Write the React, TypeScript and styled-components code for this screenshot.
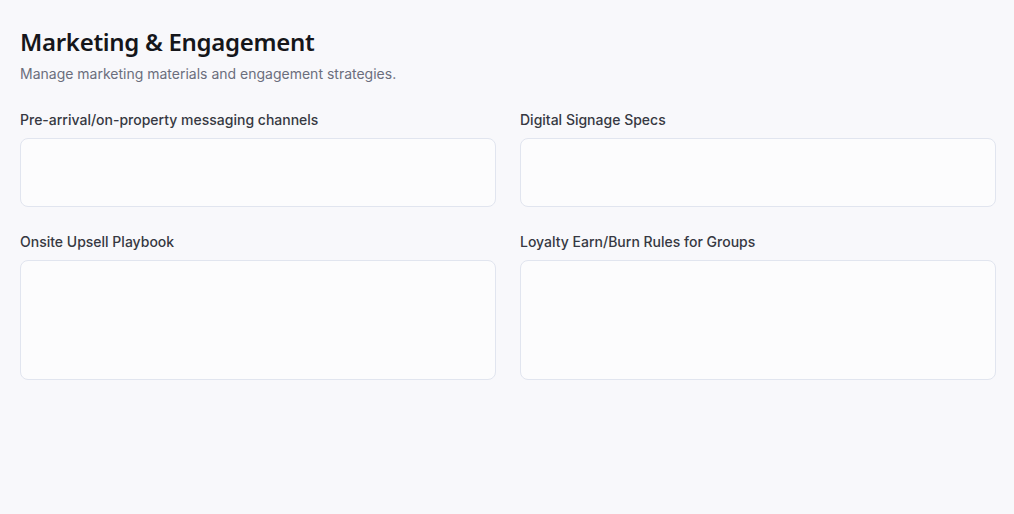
import { FunctionComponent } from 'react';
import styled, { createGlobalStyle } from 'styled-components';

interface IField {
  label: string;
  tall?: boolean;
}

const GlobalStyle = createGlobalStyle`
  html, body {
    margin: 0;
    padding: 0;
    background: #f8f8fb;
  }
  * {
    box-sizing: border-box;
  }
`;

const Page = styled.div`
  min-height: 514px;
  padding: 26px 18px 20px 20px;
  background: #f8f8fb;
  font-family: Inter, 'Noto Sans', sans-serif;
`;

const Title = styled.h1`
  margin: 0;
  font-family: 'Noto Sans', Inter, sans-serif;
  font-size: 24px;
  line-height: 32px;
  font-weight: 600;
  letter-spacing: -0.3px;
  color: #15161a;
`;

const Subtitle = styled.p`
  margin: 6px 0 0;
  font-size: 14px;
  line-height: 20px;
  color: #6b6e7d;
`;

const Grid = styled.div`
  display: grid;
  grid-template-columns: 476px 476px;
  column-gap: 24px;
  row-gap: 25px;
  margin-top: 26px;
`;

const Field = styled.div`
  display: flex;
  flex-direction: column;
  gap: 8px;
`;

const Label = styled.label`
  font-size: 14px;
  line-height: 20px;
  font-weight: 500;
  color: #363842;
`;

const TextArea = styled.textarea<{ $tall?: boolean }>`
  display: block;
  width: 100%;
  height: ${({ $tall }) => ($tall ? '120px' : '69px')};
  resize: none;
  border: 1px solid #e1e5ef;
  border-radius: 8px;
  background: #fcfcfd;
  padding: 8px 12px;
  font-family: Inter, sans-serif;
  font-size: 14px;
  color: #15161a;
  outline: none;
`;

const fields: IField[] = [
  { label: 'Pre-arrival/on-property messaging channels' },
  { label: 'Digital Signage Specs' },
  { label: 'Onsite Upsell Playbook', tall: true },
  { label: 'Loyalty Earn/Burn Rules for Groups', tall: true }
];

const App: FunctionComponent = () => {
  return (
    <>
      <GlobalStyle />
      <Page>
        <Title>Marketing &amp; Engagement</Title>
        <Subtitle>Manage marketing materials and engagement strategies.</Subtitle>
        <Grid>
          {fields.map((field) => (
            <Field key={field.label}>
              <Label>{field.label}</Label>
              <TextArea $tall={field.tall} />
            </Field>
          ))}
        </Grid>
      </Page>
    </>
  );
};

export default App;
